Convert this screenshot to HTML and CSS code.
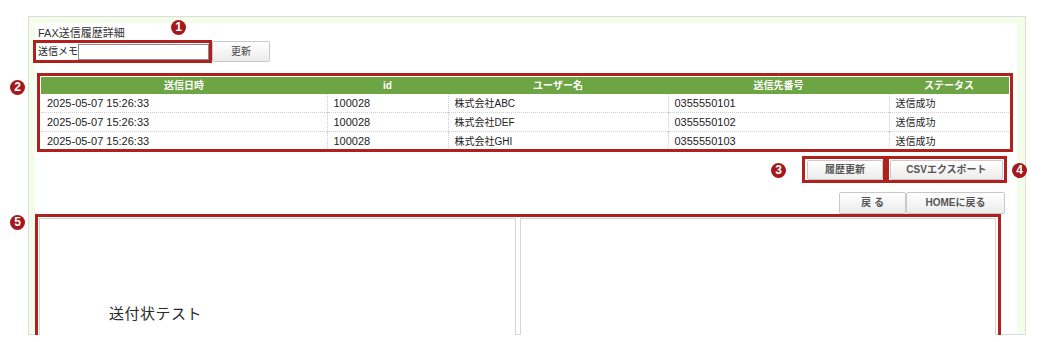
FILE: index.html
```html
<!DOCTYPE html>
<html lang="ja">
<head>
<meta charset="utf-8">
<title>FAX送信履歴詳細</title>
<link rel="stylesheet" href="styles.css">
</head>
<body>
<div class="frame">
  <div class="inner">
    <div class="title">FAX送信履歴詳細</div>
    <div class="memo-row">
      <div class="mark-box memo-box">
        <span class="memo-label">送信メモ</span>
        <input class="memo-input" type="text">
      </div>
      <button class="btn btn-update">更新</button>
    </div>

    <div class="mark-box table-box">
      <table class="history">
        <colgroup>
          <col class="c1"><col class="c2"><col class="c3"><col class="c4"><col class="c5">
        </colgroup>
        <thead>
          <tr><th>送信日時</th><th>id</th><th>ユーザー名</th><th>送信先番号</th><th>ステータス</th></tr>
        </thead>
        <tbody>
          <tr><td>2025-05-07 15:26:33</td><td>100028</td><td><span class="jp">株式会社ABC</span></td><td>0355550101</td><td><span class="jp">送信成功</span></td></tr>
          <tr><td>2025-05-07 15:26:33</td><td>100028</td><td><span class="jp">株式会社DEF</span></td><td>0355550102</td><td><span class="jp">送信成功</span></td></tr>
          <tr><td>2025-05-07 15:26:33</td><td>100028</td><td><span class="jp">株式会社GHI</span></td><td>0355550103</td><td><span class="jp">送信成功</span></td></tr>
        </tbody>
      </table>
    </div>

    <div class="actions">
      <div class="mark-box act-box box-hist"><button class="btn btn-act">履歴更新</button></div>
      <div class="mark-box act-box box-csv"><button class="btn btn-act">CSVエクスポート</button></div>
    </div>

    <div class="nav">
      <button class="btn btn-nav btn-back">戻&nbsp;る</button>
      <button class="btn btn-nav btn-home">HOMEに戻る</button>
    </div>

    <div class="mark-box preview-box">
      <div class="panel panel-left"><span class="cover-text">送付状テスト</span></div>
      <div class="panel panel-right"></div>
    </div>
  </div>
</div>

<span class="num n1">1</span>
<span class="num n2">2</span>
<span class="num n3">3</span>
<span class="num n4">4</span>
<span class="num n5">5</span>
</body>
</html>
```

FILE: styles.css
```css
html, body {
  margin: 0;
  padding: 0;
  background: #ffffff;
}

body {
  position: relative;
  padding: 16px 0 0 28px;
  font-family: "Liberation Sans", "Noto Sans CJK JP", sans-serif;
  font-size: 10px;
  color: #333;
}

.frame {
  box-sizing: border-box;
  width: 998px;
  height: 319px;
  border: 1px solid #dcdcdc;
  background: #f3fde9;
  padding: 6px 8px 0 6px;
}

.inner {
  background: #ffffff;
  height: 100%;
}

.title {
  box-sizing: border-box;
  height: 17px;
  padding: 4px 0 0 3px;
  font-size: 11px;
  line-height: 13px;
  color: #333;
  overflow: hidden;
}

.mark-box {
  box-sizing: border-box;
  border: 3px solid #b0201d;
}

.memo-row {
  display: flex;
  align-items: flex-start;
  height: 23px;
  margin-left: -2px;
}

.memo-box {
  display: flex;
  align-items: center;
  width: 179px;
  height: 23px;
  padding-left: 2px;
}

.memo-label {
  font-size: 10px;
  line-height: 12px;
  color: #222;
}

.memo-input {
  box-sizing: border-box;
  width: 131px;
  height: 16px;
  margin: 0;
  padding: 0 2px;
  border: 1px solid #8a8a8a;
  background: #fff;
}

.btn {
  box-sizing: border-box;
  display: block;
  margin: 0;
  padding: 0;
  border: 1px solid #c9c9c9;
  border-radius: 2px;
  background: linear-gradient(#ffffff, #ececec);
  font-family: "Liberation Sans", "Noto Sans CJK JP", sans-serif;
  font-size: 10px;
  line-height: 12px;
  color: #444;
  cursor: pointer;
}

.btn-update {
  width: 58px;
  height: 21px;
  margin-top: 1px;
}

.table-box {
  margin: 10px 0 0 2px;
  width: 976px;
  height: 79px;
  padding: 1px;
  overflow: hidden;
}

.history {
  width: 968px;
  border-collapse: collapse;
  table-layout: fixed;
}

.c1 { width: 286px; }
.c2 { width: 121px; }
.c3 { width: 220px; }
.c4 { width: 221px; }
.c5 { width: 120px; }

.history th {
  height: 17px;
  padding: 0;
  background: #6da544;
  color: #ffffff;
  font-weight: bold;
  font-size: 10px;
  line-height: 12px;
  text-align: center;
}

.history td {
  height: 18px;
  padding: 0 0 0 6px;
  font-size: 11px;
  line-height: 13px;
  color: #222;
  border-top: 1px dotted #cfcfcf;
  border-left: 1px dotted #cfcfcf;
  white-space: nowrap;
}

.history td .jp {
  font-size: 10px;
}

.history td:first-child {
  border-left: none;
}

.history tbody tr:first-child td {
  border-top: none;
}

.actions {
  display: flex;
  justify-content: flex-end;
  height: 27px;
  margin: 4px 10px 0 0;
}

.act-box {
  height: 27px;
  padding-top: 1px;
}

.box-hist { width: 84px; }
.box-csv { width: 121px; }

.btn-act {
  height: 20px;
  font-weight: bold;
  color: #555;
}

.box-hist .btn-act { width: 76px; margin-left: 2px; }
.box-csv .btn-act { width: 113px; margin-left: 1px; }

.nav {
  display: flex;
  justify-content: flex-end;
  height: 22px;
  margin: 9px 12px 0 0;
}

.btn-nav {
  height: 22px;
  font-weight: bold;
  color: #555;
}

.btn-back { width: 67px; }
.btn-home { width: 99px; }

.preview-box {
  display: flex;
  gap: 4px;
  width: 966px;
  height: 125px;
  padding: 1px 0 0 1px;
}

.panel {
  box-sizing: border-box;
  height: 118px;
  border: 1px solid #d4d4d4;
  background: #fff;
}

.panel-left {
  width: 477px;
  padding: 84px 0 0 69px;
  line-height: 20px;
}

.panel-right {
  width: 476px;
}

.cover-text {
  font-family: "Noto Sans CJK JP", sans-serif;
  font-weight: 400;
  font-size: 15px;
  color: #2a2a2a;
  letter-spacing: 0.5px;
}

.num {
  position: absolute;
  width: 15px;
  height: 15px;
  border-radius: 50%;
  background: #a5181b;
  color: #ffffff;
  font-family: "Liberation Sans", sans-serif;
  font-weight: bold;
  font-size: 12px;
  line-height: 15px;
  text-align: center;
}

.n1 { left: 171px; top: 20px; }
.n2 { left: 10px; top: 80px; }
.n3 { left: 771px; top: 163px; }
.n4 { left: 1012px; top: 163px; }
.n5 { left: 10px; top: 215px; }
```
